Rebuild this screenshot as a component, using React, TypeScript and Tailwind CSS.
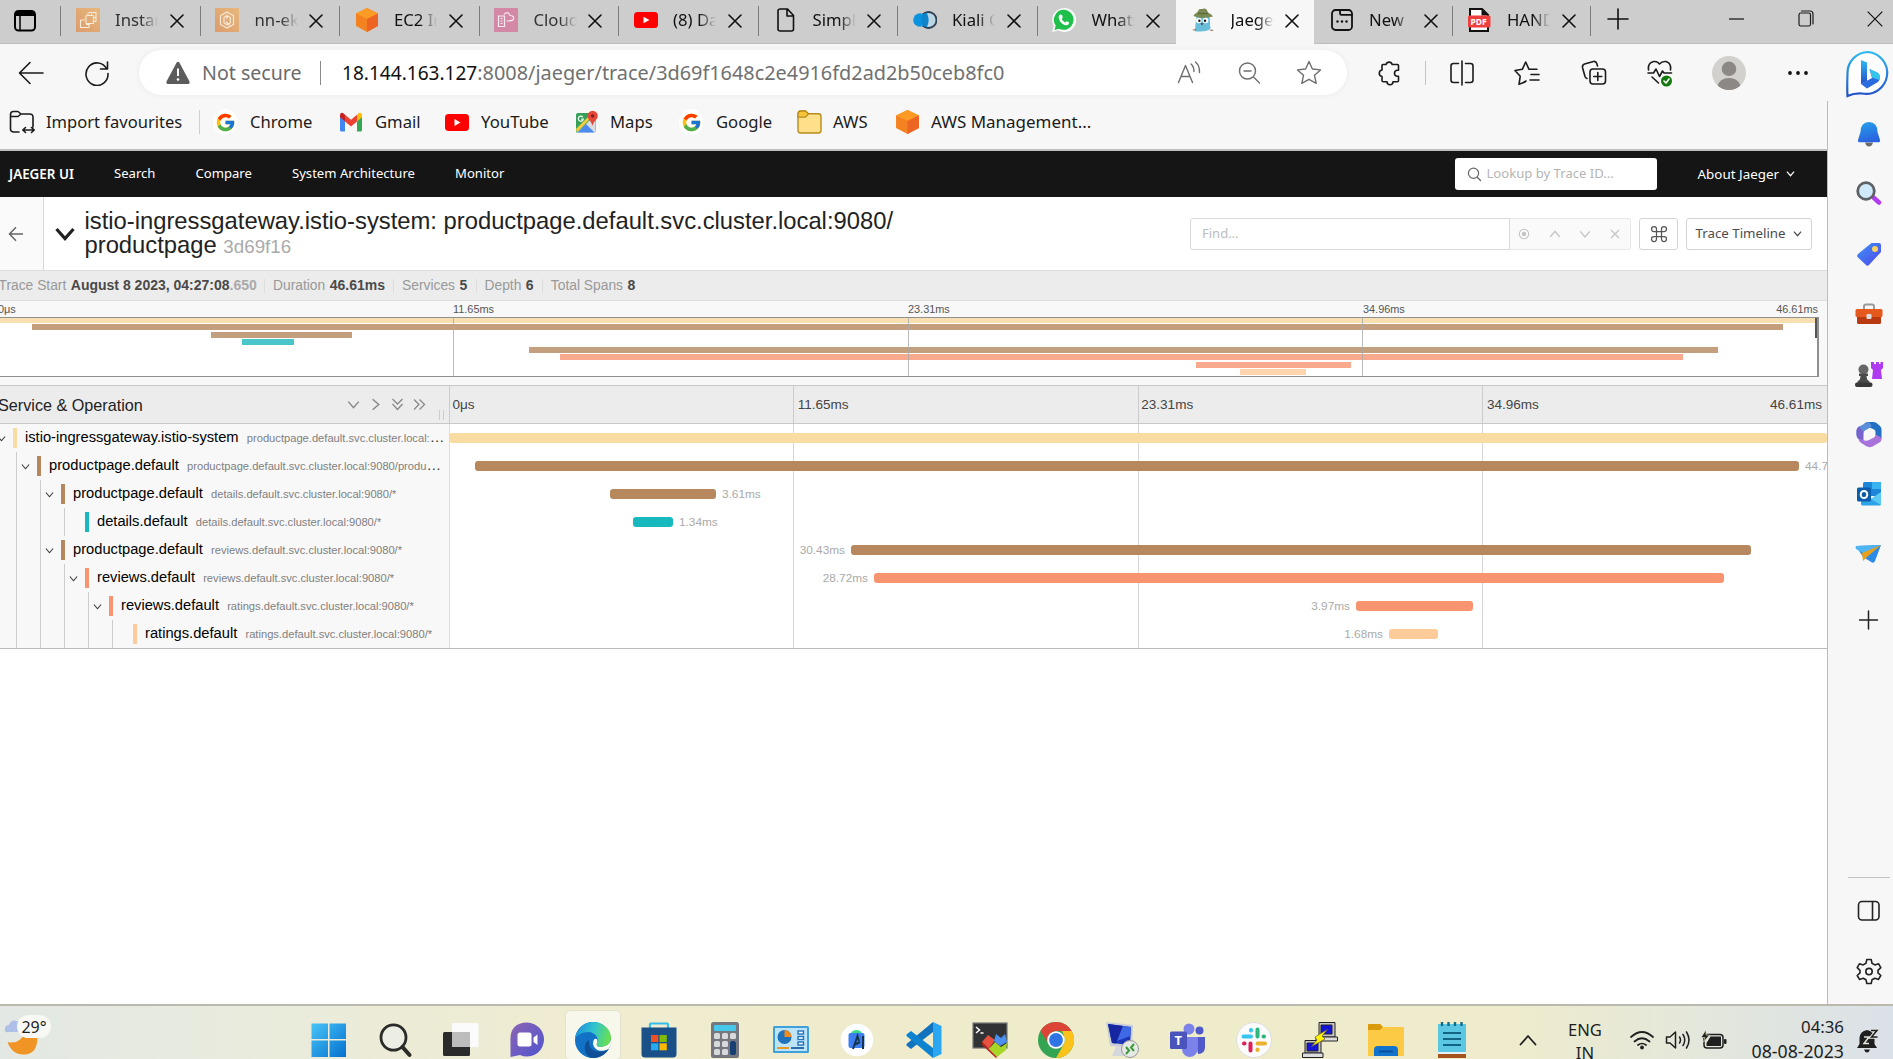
import React from "react";
import { FcGoogle } from "react-icons/fc";
import { Command } from "lucide-react";

const UI = "font-['Noto_Sans','Open_Sans',sans-serif]";
const ARIAL = "font-['Liberation_Sans',Arial,sans-serif]";

type P = React.SVGProps<SVGSVGElement>;

const line = {
  fill: "none",
  stroke: "currentColor",
  strokeWidth: 1.6,
  strokeLinecap: "round" as const,
  strokeLinejoin: "round" as const,
};

function Svg({ w = 24, h = 24, vb, children, ...rest }: P & { w?: number; h?: number; vb?: string }) {
  return (
    <svg width={w} height={h} viewBox={vb ?? `0 0 ${w} ${h}`} className="shrink-0" {...rest}>
      {children}
    </svg>
  );
}

/* ---------- favicons ---------- */

const Ec2Icon = () => (
  <Svg>
    <defs>
      <linearGradient id="ec2" x1="0" y1="1" x2="1" y2="0">
        <stop offset="0" stopColor="#dc9c6c" />
        <stop offset="1" stopColor="#e6b87c" />
      </linearGradient>
    </defs>
    <rect width="24" height="24" fill="url(#ec2)" />
    <g fill="none" stroke="#f6ead8" strokeWidth="1.1">
      <rect x="10" y="7.500" width="7.500" height="8" rx=".8" />
      <path d="M12.500 4.500H20V13.500H18M12 5V7M15.500 5.500V7M4.500 12H9M4.500 12V19.500H13V16.500M10 16.500H14M18 9.500H20" />
    </g>
  </Svg>
);

const EksIcon = () => (
  <Svg>
    <rect width="24" height="24" fill="url(#ec2)" />
    <g fill="none" stroke="#f6ead8" strokeWidth="1.200">
      <path d="M12 4L18.500 7.500V16.500L12 20L5.500 16.500V7.500Z" />
      <path d="M12 7.500L9 9.500V15L12 16.800L15.300 15V9.500L12 7.500V11M11 13.500L14.500 17.500" />
    </g>
  </Svg>
);

const AwsCube = ({ w = 24, h = 24 }: { w?: number; h?: number }) => (
  <Svg w={w} h={h} vb="0 0 24 24" preserveAspectRatio="none">
    <path d="M12 0L23 5.500V18L12 24L1 18V5.500Z" fill="#f58220" />
    <path d="M12 0L23 5.500L12 11L1 5.500Z" fill="#fb9a24" />
    <path d="M12 11L23 5.500V18L12 24Z" fill="#ec6523" />
  </Svg>
);

const CloudFormationIcon = () => (
  <Svg>
    <rect width="24" height="24" fill="#d389a5" />
    <g fill="none" stroke="#fbe9f1" strokeWidth="1.200">
      <path d="M4.500 8H10.500V18.500H4.500ZM6.500 10.500H8.500M6.500 13H8.500M6.500 15.500H8.500" />
      <path d="M10 6.500C12 3.500 16 5 16 7.500C19 7.500 20 9 19.500 11C19 12.800 17 13 12.500 13" />
    </g>
  </Svg>
);

const YouTubeIcon = ({ h = 16 }: { h?: number }) => (
  <Svg w={24} h={h} vb="0 0 24 16" preserveAspectRatio="none">
    <rect width="24" height="16" rx="3.500" fill="#f00" />
    <path d="M9.500 4.700L15.500 8L9.500 11.300Z" fill="#fff" />
  </Svg>
);

const FileIcon = () => (
  <Svg>
    <path d="M7.500 1H14.500L20.500 7.500V21Q20.500 23 18.500 23H7.500Q5 23 5 21V3Q5 1 7.500 1ZM14 1V8H20.500" {...line} stroke="#111" />
  </Svg>
);

const KialiIcon = () => (
  <Svg>
    <circle cx="15.500" cy="12" r="8" fill="#bcd6e4" stroke="#2d3f50" strokeWidth="1.800" />
    <circle cx="7" cy="12" r="6.800" fill="#0c93df" />
    <path d="M13.500 4.500A8 8 0 0 0 13.500 19.500A15 15 0 0 0 13.500 4.500" fill="#0e84cb" />
  </Svg>
);

const WhatsAppIcon = () => (
  <Svg>
    <path d="M12 0A12 12 0 1 1 6.500 22.500L0 24L1.800 18A12 12 0 0 1 12 0Z" fill="#f7faf7" />
    <path d="M12 1.800A10 10 0 1 1 7 20.700L2.500 22L3.700 17.500A10 10 0 0 1 12 1.800Z" fill="#1fbf4c" />
    <path d="M8.200 6.500L10 7L10.800 9.500L9.700 11C10.500 12.700 11.500 13.700 13.300 14.500L14.600 13.200L17 14.300C17.200 16.500 15.500 17.500 14 17.300C10 16.500 7 13 6.700 9.500C6.600 8 7.300 6.800 8.200 6.500Z" fill="#fff" />
  </Svg>
);

const JaegerIcon = () => (
  <Svg>
    <path d="M5.500 9H18.500C19.500 13 18.500 16 19.500 20C19 24 5 24 4 23C4.500 18 4.500 13 5.500 9Z" fill="#69bfdb" />
    <path d="M2.500 8C3 5.500 7 5 7.500 2C9 0 11 1.500 12 .8C14 0 16 1 16.500 3.500C17 5.500 21 6 22 8.500C15 10.500 8 10.500 2.500 8Z" fill="#7b8a52" />
    <path d="M7 5.500H17" stroke="#5d6a3a" strokeWidth="1.300" />
    <circle cx="7.800" cy="12.500" r="2.800" fill="#fff" />
    <circle cx="14.500" cy="12.500" r="2.800" fill="#fff" />
    <circle cx="8.400" cy="12.800" r="1.200" fill="#111" />
    <circle cx="14" cy="12.800" r="1.200" fill="#111" />
    <path d="M9.500 15.300H12.500L11 17.500Z" fill="#4d3525" />
    <path d="M1 22L5 20.500V23ZM20 21L23 23H19Z" fill="#a48763" />
  </Svg>
);

const NewTabIcon = () => (
  <Svg>
    <rect x="2" y="2" width="20" height="20" rx="3.500" {...line} stroke="#111" strokeWidth={1.8} />
    <path d="M10 2V5.500Q10 6.800 11.500 6.800H22" {...line} stroke="#111" strokeWidth={1.8} />
    <g fill="#111"><circle cx="7.500" cy="13.500" r="1.200" /><circle cx="12" cy="13.500" r="1.200" /><circle cx="16.500" cy="13.500" r="1.200" /></g>
  </Svg>
);

const PdfIcon = () => (
  <span className="relative -ml-px block h-6 w-6 shrink-0">
    <Svg>
      <path d="M3 1H15L21 7V23H3Z" fill="#fff" stroke="#111" strokeWidth="2" />
      <path d="M14.500 1V7.500H21Z" fill="#111" />
      <rect x="1" y="7.500" width="22.500" height="12" rx="1.500" fill="#ee3e3e" />
    </Svg>
    <span className={`absolute inset-x-0 top-[8px] text-center text-[8.500px] leading-[12px] font-bold text-white ${UI}`}>PDF</span>
  </span>
);

/* ---------- tab strip ---------- */

const tabs: { title: string; icon: React.ReactNode; w: string; dim?: boolean; active?: boolean }[] = [
  { title: "Instances", icon: <Ec2Icon />, dim: true, w: "w-[139.500px]" },
  { title: "nn-eks", icon: <EksIcon />, dim: true, w: "w-[139.500px]" },
  { title: "EC2 Instance", icon: <AwsCube />, w: "w-[139.500px]" },
  { title: "CloudFormation", icon: <CloudFormationIcon />, dim: true, w: "w-[139.500px]" },
  { title: "(8) Day", icon: <YouTubeIcon />, w: "w-[139.500px]" },
  { title: "Simple", icon: <FileIcon />, w: "w-[139.500px]" },
  { title: "Kiali Console", icon: <KialiIcon />, w: "w-[139.500px]" },
  { title: "WhatsApp", icon: <WhatsAppIcon />, w: "w-[139px]" },
  { title: "Jaeger UI", icon: <JaegerIcon />, active: true, w: "w-[138.500px]" },
  { title: "New", icon: <NewTabIcon />, w: "w-[138px]" },
  { title: "HANDS", icon: <PdfIcon />, w: "w-[137.500px]" },
];

function TabStrip() {
  return (
    <div className="flex h-[44px] shrink-0 items-start border-b border-[#bdbdbd] bg-[#cdcdcd] text-[#1b1b1b]">
      <div className="flex h-[42px] w-[60px] items-center pl-[13px]">
        <Svg>
          <rect x="2" y="2" width="20" height="19.500" rx="3.500" {...line} stroke="#000" strokeWidth={2} />
          <path d="M2 6V5Q2 2 5 2H19Q22 2 22 5V7H2Z" fill="#000" />
          <path d="M7 7V21" stroke="#000" strokeWidth="1.500" />
        </Svg>
      </div>
      {tabs.map((t, i) => (
        <div
          key={t.title}
          className={`relative flex h-[44px] shrink-0 items-start ${t.w} ${t.active ? "-mb-px bg-[#f7f7f7]" : ""}`}
        >
          {!t.active && i !== 9 && <span className="mt-[6px] h-[30px] w-px bg-[#7c7c7c]" />}
          {(t.active || i === 9) && <span className="w-px" />}
          <span className="ml-[14.500px] flex h-[40px] w-[25px] items-center">{t.icon}</span>
          <span
            className={`ml-[14.500px] h-[40px] w-[43px] overflow-hidden text-[16.700px] leading-[39px] whitespace-nowrap [mask-image:linear-gradient(to_right,black_60%,transparent)] ${t.dim ? "text-[#333]" : "text-[#111]"}`}
          >
            {t.title}
          </span>
          <span className="ml-[11.500px] flex h-[42px] items-center">
            <Svg w={14} h={14}>
              <path d="M1 1L13 13M13 1L1 13" {...line} stroke="#111" />
            </Svg>
          </span>
        </div>
      ))}
      <span className="mt-[6px] h-[30px] w-px bg-[#7c7c7c]" />
      <span className="ml-[16px] flex h-[38px] items-center">
        <Svg w={22} h={22}><path d="M11 1V21M1 11H21" {...line} stroke="#111" /></Svg>
      </span>
      <div className="ml-auto flex h-[38px] items-center pr-[10px]">
        <Svg w={16} h={16} className="mr-[53px]"><path d="M0 8H15" stroke="#111" strokeWidth="1.200" /></Svg>
        <Svg w={16} h={18} className="mr-[53px]">
          <path d="M3.500 1H12Q15 1 15 4V14" {...line} strokeWidth={1.2} />
          <rect x="1" y="3" width="11.500" height="13" rx="1.800" {...line} strokeWidth={1.2} />
        </Svg>
        <Svg w={16} h={16}><path d="M.7 .7L15.300 15.300M15.300 .7L.7 15.300" stroke="#111" strokeWidth="1.200" /></Svg>
      </div>
    </div>
  );
}

/* ---------- address bar ---------- */

function ToolCell({ children }: { children: React.ReactNode }) {
  return <span className="flex w-[66.300px] shrink-0 justify-center">{children}</span>;
}

function AddressBar() {
  return (
    <div className="flex h-[57px] shrink-0 items-center text-[#1b1b1b]">
      <div className="flex w-[139px] shrink-0 items-center pl-[18px]">
        <Svg w={26} h={24}><path d="M25 12H1.500M12 1.500L1.500 12L12 22.500" {...line} /></Svg>
        <Svg w={26} h={26} className="ml-[40px]">
          <path d="M22.800 9A11 11.300 0 1 0 24 13.500M23.500 2V9H16.500" {...line} />
        </Svg>
      </div>
      <div className="flex h-[45px] w-[1208px] shrink-0 items-center rounded-full bg-white pl-[27px] shadow-[0_0_6px_rgba(0,0,0,0.06)]">
        <Svg w={24} h={24}>
          <path d="M10.500 1.800Q12 -.2 13.500 1.800L23.500 20.500Q24 23 22 23H2Q0 23 .5 20.500Z" fill="#5c5c5c" />
          <path d="M12 7.500V15" stroke="#fff" strokeWidth="2" />
          <circle cx="12" cy="18.500" r="1.300" fill="#fff" />
        </Svg>
        <span className="ml-[12px] w-[118px] text-[19.600px] leading-[28px] whitespace-nowrap text-[#6b6b6b]">Not secure</span>
        <span className="h-[24px] w-px bg-[#8a8a8a]" />
        <span className="ml-[21px] text-[19.070px] leading-[28px] whitespace-nowrap text-[#111]">18.144.163.127</span>
        <span className="text-[19.880px] leading-[28px] whitespace-nowrap text-[#707070]">
          :8008/jaeger/trace/3d69f1648c2e4916fd2ad2b50ceb8fc0
        </span>
        <span className="mr-[25px] ml-auto flex items-center text-[#6e6e6e]">
          <Svg w={24} h={24} className="mr-[36px]">
            <path d="M1.500 21.500L8.500 4.500L15.500 21.500M4 15.500H13M14 3Q17 5.500 17 10.500M18.500 1Q23 5 22.500 11.500" {...line} strokeWidth={1.4} />
          </Svg>
          <Svg w={24} h={24} className="mr-[35px]">
            <circle cx="10.500" cy="10" r="8" {...line} strokeWidth={1.4} />
            <path d="M7 10H14M16.500 16L22.500 22" {...line} strokeWidth={1.4} />
          </Svg>
          <Svg w={26} h={25}>
            <path d="M13 1.500L16.400 9L24.500 9.900L18.500 15.300L20.200 23.300L13 19.300L5.800 23.300L7.500 15.300L1.500 9.900L9.600 9Z" {...line} strokeWidth={1.4} />
          </Svg>
        </span>
      </div>
      <span className="w-[9px]" />
      <ToolCell>
        <Svg w={24} h={26}>
          <path d="M8.500 4.500H9A3.200 3.200 0 0 1 15.200 4.500H20.500Q21.500 4.500 21.500 5.500V10.300H20.500A3 3 0 0 0 20.500 16.300H21.500V20.500Q21.500 21.800 20.500 21.800H16A3 3 0 0 1 10 21.800H6.500Q5 21.800 5 20.500V16.500A3.300 3.300 0 0 1 5 10V5.500Q5 4.500 6 4.500Z" {...line} />
        </Svg>
      </ToolCell>
      <span className="ml-[3px] h-[24px] w-px bg-[#c4c4c4]" />
      <span className="w-[3px]" />
      <ToolCell>
        <Svg w={26} h={26}>
          <path d="M9.500 3.500H4.500Q2 3.500 2 6V20Q2 22.500 4.500 22.500H9.500M13 1V25M16.500 3.500H21.500Q24 3.500 24 6V20Q24 22.500 21.500 22.500H16.500" {...line} />
        </Svg>
      </ToolCell>
      <ToolCell>
        <Svg w={28} h={26} className="-ml-[3px]">
          <path d="M12 22L6 24.300L7.200 16.300L2 10.500L9.300 9.300L12.700 2L16 9.300H24M18 14.500H26M17 20H26M10.500 22.500L13 21" {...line} />
        </Svg>
      </ToolCell>
      <ToolCell>
        <Svg w={26} h={26} className="-ml-[3px]">
          <rect x="9" y="9" width="15.500" height="15" rx="3" {...line} />
          <path d="M16.800 12.500V20.500M12.800 16.500H20.800M6 18.500Q4.500 18 4 16.500L1.500 7.500Q1 5 3.500 4L12.500 1.500Q15 1 15.800 3.500L16.500 6" {...line} />
        </Svg>
      </ToolCell>
      <ToolCell>
        <Svg w={28} h={28} className="-ml-[2px]">
          <path d="M2.500 11Q1.500 4 7.500 2.500Q11.500 2 13.500 5Q16 2 20 2.500Q25.500 4 24.500 11M2 14H7.500L10 10L13.500 17.500L16.500 12L18 14H25.500M6 18L12.500 24" {...line} />
          <circle cx="20.500" cy="22" r="5.500" fill="#13790f" />
          <path d="M18 22L20 24L23 20" {...line} stroke="#fff" />
        </Svg>
      </ToolCell>
      <ToolCell>
        <span className="ml-[2px] block h-[34px] w-[34px] overflow-hidden rounded-full">
          <Svg w={34} h={34}>
            <rect width="34" height="34" fill="#d3d1ce" />
            <circle cx="17" cy="12.800" r="7.300" fill="#8c8885" />
            <path d="M5 34C5 26 10 22 17 22C24 22 29 26 29 34Z" fill="#8c8885" />
          </Svg>
        </span>
      </ToolCell>
      <ToolCell>
        <Svg w={22} h={8} className="ml-[8px]"><g fill="#111"><circle cx="3" cy="4" r="1.900" /><circle cx="11" cy="4" r="1.900" /><circle cx="19" cy="4" r="1.900" /></g></Svg>
      </ToolCell>
    </div>
  );
}

/* ---------- bookmarks ---------- */

const GmailIcon = () => (
  <Svg w={24} h={20} vb="0 0 24 18" preserveAspectRatio="none">
    <path d="M1 3V16.500Q1 17.500 2 17.500H6V8L1 4Z" fill="#4285f4" />
    <path d="M18 8V17.500H22Q23 17.500 23 16.500V3L18 8Z" fill="#34a853" />
    <path d="M6 2.500L12 7L18 2.500V8.500L12 13L6 8.500Z" fill="#ea4335" />
    <path d="M18 2.500L20 1Q23 0 23 3V4.800L18 8.500Z" fill="#fbbc04" />
    <path d="M6 2.500L4 1Q1 0 1 3V4.800L6 8.500Z" fill="#c5221f" />
  </Svg>
);

const MapsIcon = () => (
  <Svg w={24} h={24}>
    <rect x="1" y="3" width="19.500" height="20" rx="2" fill="#34a058" />
    <path d="M2 23L20 5V23Z" fill="#d9dde2" />
    <path d="M2.500 22.500L11 14L19.500 22.500Z" fill="#4d8af0" />
    <path d="M1 19L17 3H20.500L2 22.500Z" fill="#f5cb3c" />
    <path d="M17.500 16C16.500 11 12.500 9.500 12.500 6A5 5 0 0 1 22.800 6C22.800 9.500 18.500 11 17.500 16Z" fill="#e2493b" />
    <circle cx="17.600" cy="6" r="1.800" fill="#8c1e17" />
    <path d="M7.800 7.200A2.500 2.500 0 1 0 8.300 9H6" fill="none" stroke="#fff" strokeWidth="1.200" />
  </Svg>
);

const FolderIcon = () => (
  <Svg w={25} h={24} vb="0 0 25 22" preserveAspectRatio="none">
    <path d="M1 4Q1 1 3.500 1H8.500L11.500 3.500H21.500Q24 3.500 24 6V18.500Q24 21 21.500 21H3.500Q1 21 1 18.500Z" fill="#ffe08a" stroke="#b88a1d" strokeWidth="1.400" />
    <path d="M1 6.500H8.500L11.500 3.500L8.500 1H3.500Q1 1 1 4Z" fill="#f5c63c" stroke="#b88a1d" strokeWidth="1.200" />
  </Svg>
);

function Bookmark({ icon, label, cls }: { icon: React.ReactNode; label: string; cls: string }) {
  return (
    <span className={`flex shrink-0 items-center whitespace-nowrap ${cls}`}>
      {icon}
      <span className="leading-[26px]">{label}</span>
    </span>
  );
}

const GoogleG = () => (
  <span className="flex h-[26px] w-[24px] items-center justify-center rounded-full bg-white">
    <FcGoogle size={21} />
  </span>
);

function BookmarksBar() {
  return (
    <div className="flex h-[48px] shrink-0 items-start pt-[8px] text-[#1b1b1b]">
      <span className="flex h-[26px] w-[199px] items-center pl-[9px] text-[16.550px] whitespace-nowrap">
        <Svg w={26} h={24}>
          <path d="M10 22H5Q1.500 22 1.500 19V4.500Q1.500 1.500 4.500 1.500H9L12 4H20.500Q24 4 24 7V17M1.500 6.500H9L12 4M14 20H25M16.500 17.500L13.800 20L16.500 22.500M22.500 17.500L25.200 20L22.500 22.500" {...line} />
        </Svg>
        <span className="ml-[11px]">Import favourites</span>
      </span>
      <span className="mt-px h-[24px] w-px bg-[#cfcfcf]" />
      <span className="w-[13px]" />
      <Bookmark cls="w-[126px] text-[16.650px] gap-[13px]" icon={<GoogleG />} label="Chrome" />
      <Bookmark cls="w-[106px] text-[16.650px] gap-[12px]" icon={<GmailIcon />} label="Gmail" />
      <Bookmark cls="w-[130px] text-[16.770px] gap-[12px]" icon={<YouTubeIcon h={17} />} label="YouTube" />
      <Bookmark cls="w-[104px] text-[16.650px] gap-[11px]" icon={<MapsIcon />} label="Maps" />
      <Bookmark cls="w-[118px] text-[16.650px] gap-[13px]" icon={<GoogleG />} label="Google" />
      <Bookmark cls="w-[98px] text-[16.650px] gap-[11px]" icon={<FolderIcon />} label="AWS" />
      <Bookmark cls="text-[16.980px] gap-[11px]" icon={<AwsCube w={25} h={24} />} label="AWS Management..." />
    </div>
  );
}

/* ---------- Jaeger ---------- */

const Chevron = ({ d = "down", s = 10, w = 1.3 }: { d?: "down" | "up" | "right"; s?: number; w?: number }) => (
  <Svg w={s} h={s} vb="0 0 10 10">
    <path
      d={d === "down" ? "M1 2.800L5 7.500L9 2.800" : d === "up" ? "M1 7.500L5 2.800L9 7.500" : "M2.800 1L7.500 5L2.800 9"}
      fill="none"
      stroke="currentColor"
      strokeWidth={w}
    />
  </Svg>
);

function NavBar() {
  return (
    <div className="flex h-[46px] shrink-0 items-center bg-[#151515] text-[13.100px] whitespace-nowrap text-white">
      <span className="w-[105px] pl-[9px] text-[13.400px] font-semibold">JAEGER UI</span>
      <span className="w-[90.500px] pl-[9px]">Search</span>
      <span className="w-[96.500px]">Compare</span>
      <span className="w-[163px]">System Architecture</span>
      <span>Monitor</span>
      <span className="ml-auto flex h-[32px] w-[202px] items-center rounded-[3px] bg-white pl-[12px] text-[#b5b5b5]">
        <Svg w={15} h={15}>
          <circle cx="6.500" cy="6.300" r="5.100" {...line} stroke="#666" strokeWidth={1.2} />
          <path d="M10.300 10.200L13.500 13.500" {...line} stroke="#666" strokeWidth={1.3} />
        </Svg>
        <span className="ml-[4.500px]">Lookup by Trace ID...</span>
      </span>
      <span className="ml-[40.500px] flex w-[129.500px] items-center gap-[7px] text-[13.400px]">
        About Jaeger <Chevron s={9} />
      </span>
    </div>
  );
}

function TraceHeader() {
  return (
    <div className="flex h-[74px] shrink-0 items-center border-b border-[#ddd] bg-white">
      <span className="flex h-full w-[44px] shrink-0 items-center border-r border-[#d8d8d8] bg-[#fafafa] pl-[8px] text-[#666]">
        <Svg w={16} h={16}><path d="M15 8H1.500M8 1.300L1.500 8L8 14.700" {...line} strokeWidth={1.5} strokeLinecap="butt" strokeLinejoin="miter" /></Svg>
      </span>
      <Svg w={20} h={14} className="ml-[10.500px]">
        <path d="M1.500 2L10 11.500L18.500 2" fill="none" stroke="#222" strokeWidth="3.200" />
      </Svg>
      <h1 className="mt-px ml-[10px] w-[830px] text-[23.790px] leading-[24.500px] text-[#222]">
        istio-ingressgateway.istio-system: productpage.default.svc.cluster.local:9080/
        <br />
        productpage <span className="text-[18.760px] text-[#aaa]">3d69f16</span>
      </h1>
      <div className="ml-auto flex h-[32px] items-stretch pr-[15px]">
        <span className="flex w-[320px] items-center rounded-l-[3px] border border-[#d9d9d9] pl-[11px] text-[#bdbdbd]">
          <span className={`text-[13px] ${UI}`}>Find...</span>
        </span>
        <span className="flex w-[121px] items-center justify-between rounded-r-[3px] border border-l-0 border-[#e8e8e8] bg-[#fafafa] pr-[10px] pl-[8px] text-[#c4c4c4]">
          <Svg w={12} h={12}><circle cx="6" cy="6" r="4.700" fill="none" stroke="currentColor" strokeWidth="1.100" /><circle cx="6" cy="6" r="2.200" fill="currentColor" /></Svg>
          <Chevron d="up" s={12} w={1.100} />
          <Chevron s={12} w={1.100} />
          <Svg w={10} h={10}><path d="M1 1L9 9M9 1L1 9" stroke="currentColor" strokeWidth="1.300" /></Svg>
        </span>
        <span className="ml-[8px] flex w-[39px] items-center justify-center rounded-[3px] border border-[#d4d4d4] text-[#555]">
          <Command size={20} strokeWidth={1.500} />
        </span>
        <span className="ml-[8px] flex w-[126px] items-center gap-[7px] rounded-[3px] border border-[#d4d4d4] pl-[8.500px] text-[13.300px] whitespace-nowrap text-[#4c4c4c]">
          <span className={UI}>Trace Timeline</span>
          <Chevron s={9} />
        </span>
      </div>
    </div>
  );
}

const facts = [
  { label: "Trace Start", value: "August 8 2023, 04:27:08", tail: ".650", cls: "w-[274.500px]" },
  { label: "Duration", value: "46.61ms", cls: "w-[129px]" },
  { label: "Services", value: "5", cls: "w-[82.500px]" },
  { label: "Depth", value: "6", cls: "w-[66.300px]" },
  { label: "Total Spans", value: "8", cls: "" },
];

function Facts() {
  return (
    <div className="flex h-[30px] shrink-0 items-center border-b border-[#dedede] bg-[#ececec] text-[13.820px] whitespace-nowrap">
      {facts.map((f, i) => (
        <span key={f.label} className={`flex items-center ${f.cls} ${i === 0 ? "-ml-[1.500px]" : ""}`}>
          <span className="text-[#999]">{f.label}</span>
          <span className="ml-[4.500px] text-[14px] font-bold text-[#4a4a4a]">
            {f.value}
            {f.tail && <span className="text-[#aaa]">{f.tail}</span>}
          </span>
          {i < 4 && <span className="mr-[8px] ml-auto h-[14px] w-px bg-[#ddd]" />}
        </span>
      ))}
    </div>
  );
}

const miniBars = [
  { x: 0, w: 1818, c: "bg-[#f8dfb2]" },
  { x: 34, w: 1751, c: "bg-[#c39f7d]" },
  { x: 213, w: 141, c: "bg-[#c39f7d]" },
  { x: 243.5, w: 52.5, c: "bg-[#48c6ca]" },
  { x: 531, w: 1189, c: "bg-[#c39f7d]" },
  { x: 562, w: 1123, c: "bg-[#f8a98e]" },
  { x: 1198, w: 155, c: "bg-[#f8a98e]" },
  { x: 1242, w: 66, c: "bg-[#fdd4ab]" },
];

function MiniMap() {
  return (
    <div className="h-[84px] shrink-0 overflow-hidden bg-[#f8f8f8]">
      <div className="-ml-[2px] w-[1822px]">
        <div className="grid h-[16px] w-[1820px] grid-cols-4 text-[10.900px] leading-[16px] text-[#555]">
          <span>0μs</span>
          <span>11.65ms</span>
          <span>23.31ms</span>
          <span className="flex justify-between"><span>34.96ms</span><span>46.61ms</span></span>
        </div>
        <div className="relative h-[60px] w-[1821px] overflow-hidden border-y border-r-2 border-[#909090] bg-white">
          <div className="-mt-px flex flex-col gap-[1.450px]">
            {miniBars.map((b, i) => (
              <span key={i} className={`block h-[6px] shrink-0 ${b.c}`} style={{ marginLeft: b.x, width: b.w }} />
            ))}
          </div>
          <div className="absolute inset-y-0 left-0 grid w-[1819px] grid-cols-4">
            <span />
            <span className="border-l border-[#aaa]/80" />
            <span className="border-l border-[#aaa]/80" />
            <span className="border-l border-[#aaa]/80" />
          </div>
          <span className="absolute top-0 right-0 h-[20px] w-[2px] bg-[#555]" />
        </div>
      </div>
    </div>
  );
}

type Span = {
  depth: number;
  name: string;
  op: string;
  bar: string;
  x: number;
  w: number;
  label?: string;
  left?: boolean;
  leaf?: boolean;
};

const BROWN = "bg-[#b7885e]";
const spans: Span[] = [
  { depth: 0, name: "istio-ingressgateway.istio-system", op: "productpage.default.svc.cluster.local:9080/productpage", bar: "bg-[#f8dca1]", x: 0, w: 1378 },
  { depth: 1, name: "productpage.default", op: "productpage.default.svc.cluster.local:9080/productpage", bar: BROWN, x: 26, w: 1324, label: "44.7ms" },
  { depth: 2, name: "productpage.default", op: "details.default.svc.cluster.local:9080/*", bar: BROWN, x: 161, w: 106, label: "3.61ms" },
  { depth: 3, name: "details.default", op: "details.default.svc.cluster.local:9080/*", bar: "bg-[#17b8be]", x: 184, w: 40, label: "1.34ms", leaf: true },
  { depth: 2, name: "productpage.default", op: "reviews.default.svc.cluster.local:9080/*", bar: BROWN, x: 402, w: 900, label: "30.43ms", left: true },
  { depth: 3, name: "reviews.default", op: "reviews.default.svc.cluster.local:9080/*", bar: "bg-[#f89570]", x: 425, w: 850, label: "28.72ms", left: true },
  { depth: 4, name: "reviews.default", op: "ratings.default.svc.cluster.local:9080/*", bar: "bg-[#f89570]", x: 907, w: 117, label: "3.97ms", left: true },
  { depth: 5, name: "ratings.default", op: "ratings.default.svc.cluster.local:9080/*", bar: "bg-[#ffcb99]", x: 940, w: 49, label: "1.68ms", left: true, leaf: true },
];

function TimelineHeader() {
  return (
    <div className="flex h-[39px] shrink-0 border-y border-[#c8c8c8] bg-[#ececec]">
      <div className="flex w-[450px] shrink-0 items-center border-r border-[#ccc] text-[#888]">
        <span className="mt-[2px] -ml-[2px] text-[16.200px] whitespace-nowrap text-[#222]">Service &amp; Operation</span>
        <span className="ml-auto flex items-center gap-[9px] pr-[13px]">
          <Chevron s={13} w={1.1} />
          <Chevron s={13} w={1.1} d="right" />
          <Svg w={13} h={13}><path d="M1.500 1L6.500 6L11.500 1M1.500 6L6.500 11.500L11.500 6" fill="none" stroke="currentColor" strokeWidth="1.300" /></Svg>
          <Svg w={13} h={13}><path d="M1 1.500L6 6.500L1 11.500M6.500 1.500L11.500 6.500L6.500 11.500" fill="none" stroke="currentColor" strokeWidth="1.300" /></Svg>
        </span>
        <span className="mr-[5.500px] mb-[3px] h-[10px] w-[5px] self-end border-x border-[#ccc]" />
      </div>
      <div className="-ml-[1.500px] grid flex-1 grid-cols-4 pt-[2px] text-[13.560px] text-[#444]">
        <span className="flex items-center pl-[4px]">0μs</span>
        <span className="-mt-[2px] flex items-center border-l border-[#ccc] pt-[2px] pl-[3.500px]">11.65ms</span>
        <span className="-mt-[2px] flex items-center border-l border-[#ccc] pt-[2px] pl-[2.500px]">23.31ms</span>
        <span className="-mt-[2px] flex items-center justify-between border-l border-[#ccc] pt-[2px] pr-[5px] pl-[3.500px]">
          <span>34.96ms</span>
          <span>46.61ms</span>
        </span>
      </div>
    </div>
  );
}

function SpanRow({ s }: { s: Span }) {
  return (
    <div className="flex h-[28px]">
      <div className="flex w-[450px] shrink-0 items-stretch overflow-hidden border-r border-[#ddd] bg-[#f8f8f8] pr-[3.800px]">
        <span className="-ml-[7px]" />
        {Array.from({ length: s.depth }, (_, i) => (
          <span key={i} className="w-[24px] shrink-0 border-r border-[#cdcdcd]" />
        ))}
        <span className="flex w-[20px] shrink-0 items-center pl-[4px] text-[#333]">{!s.leaf && <Chevron s={9} w={1.2} />}</span>
        <span className={`my-[4px] w-[4px] shrink-0 ${s.bar}`} />
        <span className="ml-[8px] shrink-0 text-[14.700px] leading-[27px] whitespace-nowrap text-black">{s.name}</span>
        <span className="ml-[8.200px] min-w-0 overflow-hidden text-[14.670px] leading-[27px] text-ellipsis whitespace-nowrap text-[#333]">
          <span className="text-[11.170px] text-[#808080]">{s.op}</span>
        </span>
      </div>
      <div className="relative -ml-px flex min-w-0 flex-1 items-center overflow-hidden">
        <div className="absolute inset-y-0 right-0 -left-[0.500px] grid grid-cols-4">
          <span />
          <span className="border-l border-[#d6d6d6]" />
          <span className="border-l border-[#d6d6d6]" />
          <span className="border-l border-[#d6d6d6]" />
        </div>
        <div className={`relative h-[10px] shrink-0 rounded-[3px] ${s.bar}`} style={{ marginLeft: s.x, width: s.w }}>
          {s.label && (
            <span
              className={`absolute top-1/2 -translate-y-1/2 text-[11.830px] leading-[16px] text-[#aaa] ${s.left ? "right-full mr-[6px]" : "left-full ml-[6px]"}`}
            >
              {s.label}
            </span>
          )}
        </div>
      </div>
    </div>
  );
}

function JaegerPage() {
  return (
    <main className="flex min-h-0 flex-1 flex-col overflow-hidden bg-white">
      <NavBar />
      <div className={`flex min-h-0 flex-1 flex-col ${ARIAL}`}>
        <TraceHeader />
        <Facts />
        <MiniMap />
        <TimelineHeader />
        <div className="border-b border-[#bbb]">
          {spans.map((s, i) => (
            <SpanRow key={i} s={s} />
          ))}
        </div>
      </div>
    </main>
  );
}

/* ---------- Edge sidebar ---------- */

const BingIcon = () => (
  <Svg w={46} h={48}>
    <defs>
      <linearGradient id="bg1" x1="0" y1="0" x2="0" y2="1">
        <stop offset="0" stopColor="#2db9f0" />
        <stop offset="1" stopColor="#2450c8" />
      </linearGradient>
    </defs>
    <path d="M23 2A21 21 0 1 1 17 43.500Q9 43 2.500 46Q2 40 2.500 23A21 21 0 0 1 23 2Z" fill="#fff" stroke="url(#bg1)" strokeWidth="2.200" />
    <path d="M16 10L22 12.500V31L16 34Z" fill="url(#bg1)" />
    <path d="M24.500 19L33 23Q37 27 33 32L22 38.500L16 34L27 28Z" fill="#2a6be0" />
    <path d="M24.500 19L33 23Q36 26 34.500 30L27 27.500Z" fill="#35c5ea" />
  </Svg>
);

const sideIcons: { h: string; icon: React.ReactNode }[] = [
  { h: "h-[60px]", icon: (
    <Svg w={24} h={26}><defs><linearGradient id="bell" x1="0" y1="0" x2="0.300" y2="1"><stop offset="0" stopColor="#25a3ea" /><stop offset="1" stopColor="#2a63e0" /></linearGradient></defs>
      <path d="M8 21.500H16Q15 25.500 12 25.500Q9 25.500 8 21.500Z" fill="#6b6b6b" /><path d="M12 1Q20.500 1.500 20.500 11L23 19Q23.500 21.300 21 21.300H3Q.5 21.300 1 19L3.500 11Q3.500 1.500 12 1Z" fill="url(#bell)" /></Svg>) },
  { h: "h-[59px]", icon: (
    <Svg w={26} h={26}><path d="M18 17L23 21.500" stroke="#b43cf0" strokeWidth="4.500" strokeLinecap="round" /><circle cx="10" cy="10" r="8.300" fill="#cfe9fa" stroke="#5e6165" strokeWidth="2.800" /></Svg>) },
  { h: "h-[61px]", icon: (
    <Svg w={26} h={26}><defs><linearGradient id="tag" x1="0" y1="0" x2="1" y2="1"><stop offset="0" stopColor="#3b93f5" /><stop offset="1" stopColor="#5148e8" /></linearGradient></defs>
      <path d="M15.500 2H23Q25 2 25 4V11L13 24Q11.500 25.500 10 24L1.500 16Q.5 14.500 2 13Z" fill="url(#tag)" /><circle cx="19" cy="8" r="3" fill="#f8d25c" /></Svg>) },
  { h: "h-[60px]", icon: (
    <Svg w={28} h={24}><path d="M9 8V4.500Q9 2.500 11 2.500H17Q19 2.500 19 4.500V8" fill="none" stroke="#9a9a9a" strokeWidth="2" /><rect x="2" y="12" width="24" height="10" rx="1.500" fill="#b93a11" /><rect x=".5" y="7" width="27" height="8" rx="1.500" fill="#e5591f" /><rect x="11.500" y="12" width="5" height="5" rx="1" fill="#ddd" /></Svg>) },
  { h: "h-[60px]", icon: (
    <Svg w={28} h={27}><path d="M16 1H19V3H21V1H24V3H25.500V1H28V7L26 9L27 18H17L18 9L16 7Z" fill="#b03af2" /><circle cx="8.500" cy="8.500" r="5" fill="#666" /><path d="M4 12.500H13V15H11.500Q11.500 19 14.500 20.500V22H2.500V20.500Q5.500 19 5.500 15H4Z" fill="#4a4a4a" /><rect x="0" y="21.500" width="17.500" height="4.500" rx="2" fill="#383838" /></Svg>) },
  { h: "h-[60px]", icon: (
    <Svg w={26} h={27}>
      <path d="M8 3Q9.500 1 12 1H17Q19 1 20.500 2L23.500 4.500Q25.500 6 25.500 8.500V18L19.500 14V11Q19.500 9 18 8.500L13.500 6.500Z" fill="#2170c4" />
      <path d="M8 3L12.500 1Q18 5 13.500 7L9 9.500Q7 10.500 7 13V20L2.500 18Q.5 16.500 .5 14V9.500Q.5 7 3 5.500Z" fill="#5b8fdc" />
      <path d="M.5 13.500V9.500Q.5 7 3 5.500L7.500 11V20L2.500 18Q.5 16.500 .5 13.500Z" fill="#7a62cc" />
      <path d="M2.500 18L7 19Q10 20.500 13 19L18 16.500Q19.500 15.500 19.500 13.500L25.500 16.500V18Q25.500 20.500 23.500 21.500L16.500 25.500Q13 27 10 25L4.500 21.500Q3 20.500 2.500 18Z" fill="#a873da" />
      <path d="M9 10.500L14 8L18.500 10.500V15L13 18L9 15.500Z" fill="#f7f7f7" />
    </Svg>) },
  { h: "h-[60px]", icon: (
    <Svg w={26} h={26}><rect x="7" y="1" width="18" height="14" rx="1.500" fill="#1c87d8" /><rect x="16" y="1" width="9" height="7" fill="#38b4ef" /><path d="M5 13L15 18L25 11V23Q25 24.500 23.500 24.500H6.500Q5 24.500 5 23Z" fill="#2ea3e6" /><path d="M15 18L25 11V24Z" fill="#5bcaf5" /><rect x="1" y="6.500" width="14" height="14" rx="1.500" fill="#0b5cab" /><ellipse cx="8" cy="13.500" rx="3.300" ry="3.600" fill="none" stroke="#fff" strokeWidth="2" /></Svg>) },
  { h: "h-[60px]", icon: (
    <Svg w={27} h={20}><path d="M1 2L26 1L20 17Q19 19.500 17 18.500L8 13Z" fill="#2d8be8" /><path d="M1 2Q0 3 1 5L8 9L26 1Z" fill="#4fb5f2" /><path d="M26 1L7 9L8 17L12.500 12.500Z" fill="#e9a01d" /></Svg>) },
  { h: "h-[71px]", icon: <Svg w={20} h={20}><path d="M9.500 1V19M.5 10H18.500" {...line} stroke="#222" strokeWidth={1.5} /></Svg> },
];

function Sidebar() {
  return (
    <aside className="-mt-[57px] flex w-[65px] shrink-0 flex-col items-center pl-[16px]">
      <div className="flex h-[60px] items-center pr-px"><BingIcon /></div>
      {sideIcons.map((s, i) => (
        <div key={i} className={`flex items-center justify-center ${s.h}`}>{s.icon}</div>
      ))}
      <div className="mt-auto h-[1.500px] w-[42px] bg-[#c4c4c4]" />
      <div className="flex h-[66px] items-center">
        <Svg w={24} h={22}><rect x="1.500" y="1.500" width="20.500" height="18.500" rx="3.500" {...line} stroke="#222" /><path d="M15.500 1.500V20" stroke="#222" strokeWidth="1.600" /></Svg>
      </div>
      <div className="mb-[5px] flex h-[55px] items-center">
        <Svg w={26} h={27} vb="0 0 26 27">
          <path d="M10.800 1.500H15.200L16 5.300L18.800 6.900L22.500 5.700L24.800 9.600L22 12.300V14.900L24.800 17.500L22.500 21.400L18.800 20.200L16 21.800L15.200 25.500H10.800L10 21.800L7.200 20.200L3.500 21.400L1.200 17.500L4 14.900V12.300L1.200 9.600L3.500 5.700L7.200 6.900L10 5.300Z" {...line} stroke="#222" />
          <circle cx="13" cy="13.600" r="3.200" {...line} stroke="#222" />
        </Svg>
      </div>
    </aside>
  );
}

/* ---------- Windows taskbar ---------- */

const pinned: React.ReactNode[] = [
  <Svg w={36} h={36}><defs><linearGradient id="win" x1="0" y1="0" x2="1" y2="1"><stop offset="0" stopColor="#46c4f7" /><stop offset="1" stopColor="#0670cf" /></linearGradient></defs><path d="M.5 1.500H17V17H.5ZM18.500 1.500H35V17H18.500ZM.5 18.500H17V35H.5ZM18.500 18.500H35V35H18.500Z" fill="url(#win)" /></Svg>,
  <Svg w={36} h={36}><ellipse cx="16.500" cy="15.500" rx="12.500" ry="12.700" fill="#eceee4" stroke="#2b2b28" strokeWidth="2.800" /><path d="M25.500 25L32.500 33" stroke="#2b2b28" strokeWidth="4" strokeLinecap="round" /></Svg>,
  <Svg w={36} h={36}><rect x="0" y="10" width="27" height="24" rx="1.500" fill="#2b2b2b" /><rect x="9" y="1" width="26.500" height="24" rx="1.500" fill="#fbfbfb" /><rect x="9" y="10" width="18" height="15" fill="#bdbdbd" /></Svg>,
  <Svg w={36} h={36}><defs><linearGradient id="chat" x1="0" y1="0" x2="1" y2="1"><stop offset="0" stopColor="#8d64b4" /><stop offset="1" stopColor="#4f55cf" /></linearGradient></defs><path d="M18 .5A17 17 0 1 1 11 33L1.500 35V20Q0 1 18 .5Z" fill="url(#chat)" /><rect x="8.500" y="10.500" width="14" height="14" rx="2.500" fill="#fff" /><path d="M24.500 15.500L28.500 12.500V23L24.500 20Z" fill="#fff" /></Svg>,
  <Svg w={36} h={36}><defs><linearGradient id="e1" x1="0" y1="0.300" x2="1" y2="0.500"><stop offset="0" stopColor="#1c8fd8" /><stop offset=".5" stopColor="#31c3d0" /><stop offset="1" stopColor="#6be04b" /></linearGradient></defs>
    <circle cx="18" cy="18" r="18" fill="#1272c6" /><path d="M0 17C1 7 9 0 18 0C28 0 36 7 36 16C36 22 31 25 25 25C22 25 21 23.500 22 21C24 16 21 11 14 10C7 10 2 13 0 17Z" fill="url(#e1)" /><path d="M14 18C13 26 19 31 27 29.500C30 29 32 28 34 26.500C30 34 22 37 15 35.500C8 31 8 21 14 18Z" fill="#0f4f95" /><path d="M22 21C21 23.500 22 25 25 25C30 25 34 23 36 18V22L33.500 27C28 30 20 30 18 22Q17.500 19 19.500 17Q23 16 22 21Z" fill="#fafaf0" /></Svg>,
  <Svg w={36} h={36}><path d="M9 8V2.500Q9 1.500 10 1.500H26Q27 1.500 27 2.500V8" fill="none" stroke="#35bde9" strokeWidth="2.200" /><path d="M.5 5.500H35.500V32Q35.500 35.500 32 35.500H4Q.5 35.500 .5 32Z" fill="#1a4f87" /><rect x="10" y="13" width="7.300" height="7" fill="#f25022" /><rect x="18.500" y="13" width="7.300" height="7" fill="#7fba00" /><rect x="10" y="21.300" width="7.300" height="7" fill="#27a9ee" /><rect x="18.500" y="21.300" width="7.300" height="7" fill="#ffb900" /></Svg>,
  <Svg w={36} h={36}><rect x="4" y="0" width="28" height="36" rx="2.500" fill="#74787e" /><rect x="7" y="3" width="22" height="6" rx="1" fill="#45c8ea" />{[11, 19, 27].map((y) => [7, 15, 23].map((x) => <rect key={`${x}-${y}`} x={x} y={y} width="6" height="6" rx="1.500" fill="#d9dade" />))}<rect x="23" y="19" width="6" height="14" rx="1.500" fill="#173f74" /></Svg>,
  <Svg w={36} h={36}><rect x="0" y="4" width="36" height="27" rx="1.500" fill="#3ea1dc" /><rect x="2" y="6" width="32" height="23" fill="#bde4f8" /><circle cx="11.500" cy="15" r="7" fill="#2073bb" /><path d="M11.500 15V8A7 7 0 0 1 18.500 15Z" fill="#f08b1c" /><g fill="#fff" stroke="#2073bb" strokeWidth="1.400"><rect x="25" y="9" width="5.500" height="3" /><rect x="25" y="14.500" width="5.500" height="3" /><rect x="25" y="20" width="5.500" height="3" /></g><path d="M4 26H16" stroke="#e39a2a" strokeWidth="2" /><path d="M18 26H31" stroke="#2b6ea8" strokeWidth="2" /></Svg>,
  <Svg w={36} h={36}><circle cx="18" cy="18" r="16.300" fill="#fff" /><rect x="9.500" y="11" width="16" height="15" rx="2" fill="#3d7ff0" /><path d="M12 11A6 5 0 0 1 23 11Z" fill="#3ddc84" /><path d="M14 27L18.500 14L20 19M24 14V27M16 22.500L21 20" stroke="#16334f" strokeWidth="2" fill="none" /></Svg>,
  <Svg w={36} h={36}><path d="M27 0V10L5 27L.5 23.500V22Z" fill="#1173bd" /><path d="M27 36V26L5 9L.5 12.500V14Z" fill="#0e83d0" /><path d="M27 0L35.500 4V32L27 36V10Z" fill="#2ba6f0" /></Svg>,
  <Svg w={36} h={36}><rect x="1" y="1" width="34" height="25" fill="#303234" stroke="#777" strokeWidth="1.200" /><path d="M4 5L7.500 8L4 11M8.500 11H11.500" fill="none" stroke="#fff" strokeWidth="1.500" /><path d="M16 13L23 18L17 27L10 20Z" fill="#e8503f" /><path d="M24 12L29 16L33 12L35 20L28 24L22 19Z" fill="#4b8ff0" /><path d="M23 20L29 25L35 21L34 28L25 35L17 27Z" fill="#a8d627" /><path d="M10 20L17 27L25 35L24 36L10 23Z" fill="#b3261c" /></Svg>,
  <Svg w={36} h={36}><circle cx="18" cy="18" r="18" fill="#33a552" /><path d="M2.400 9A18 18 0 0 1 33.600 9H18Q9 10 9.500 20Z" fill="#dc4437" /><path d="M33.600 9A18 18 0 0 1 18 36L26 22Q28 15 24 9Z" fill="#fbc319" /><circle cx="18" cy="18" r="8.800" fill="#fff" /><circle cx="18" cy="18" r="6.900" fill="#2f74e4" /></Svg>,
  <Svg w={36} h={36}><path d="M2 0L29 3L28 26L6 24Z" fill="#c9ced6" /><path d="M4 2L27 5L26 23L8 21Z" fill="#1a35b8" /><path d="M4 2L19 4L12 21.500L8 21Z" fill="#1526a0" /><path d="M19 4L27 5L26.500 14L13 19Z" fill="#3f68e6" /><path d="M12 25L22 26L24 34H8Z" fill="#d4d7dc" /><circle cx="26" cy="27" r="8.500" fill="#e7e9e6" stroke="#999" /><path d="M22 25L25 28.500L22 32M30 22L27 25.500L30 29" stroke="#3c9a39" strokeWidth="2" fill="none" /></Svg>,
  <span className="relative block h-[36px] w-[36px]"><Svg w={36} h={36}><circle cx="29.500" cy="8.500" r="4" fill="#5059c9" /><path d="M25 15H35V25Q35 32 28 32Z" fill="#5059c9" /><circle cx="19" cy="7" r="5.500" fill="#7b83eb" /><path d="M12 15H28V26Q27 35 19 35Q12 34 12 26Z" fill="#7b83eb" /><rect x="0" y="9.500" width="17" height="17.500" rx="1.500" fill="#4b53bc" /></Svg><b className="absolute top-[9px] left-0 w-[17px] text-center text-[13px] leading-[18px] text-white">T</b></span>,
  <Svg w={36} h={36}><circle cx="18" cy="18" r="17.500" fill="#fbfbfb" stroke="#ddd" /><g strokeWidth="4" strokeLinecap="round"><path d="M7.500 14.500H15M15 8V8.500" stroke="#36c5f0" /><path d="M21.500 7.500V14.500M28 14.500H27.500" stroke="#2eb67d" /><path d="M21.500 21.500H29M21.500 28V27.500" stroke="#ecb22e" /><path d="M14.500 21.500V28.500M8 21.500H8.500" stroke="#e01e5a" /></g></Svg>,
  <Svg w={36} h={36}><g stroke="#222" strokeWidth="1"><path d="M17 .5H33V15H17Z" fill="#c5c5c5" /><path d="M19 3H30V12H19Z" fill="#1414d8" /><path d="M14 15H35.500V19H14Z" fill="#ddd" /><path d="M3 18.500H19V31H3Z" fill="#c5c5c5" /><path d="M5 21H16V29H5Z" fill="#1414d8" /><path d="M.5 31H21V35.500H.5Z" fill="#ddd" /></g><path d="M26 7L13 15L15 18L9 25L23 17L20 14Z" fill="#fff100" stroke="#444" strokeWidth=".6" /></Svg>,
  <Svg w={36} h={36}><path d="M0 3Q0 2 1 2H12L15 5H35Q36 5 36 6V34H0Z" fill="#fcca45" /><path d="M0 3Q0 2 1 2H12L15 5L12 8H0Z" fill="#d99a0b" /><path d="M6 34V28Q6 24 10 24H26Q30 24 30 28V34Z" fill="#1273cf" /><path d="M11 29.500H25" stroke="#0a4d97" strokeWidth="1.800" /></Svg>,
  <Svg w={36} h={36}><path d="M4 2H32V30H4Z" fill="#5cc7e3" /><path d="M4 30H32V32H4Z" fill="#e6f1f5" /><rect x="4" y="32" width="28" height="4" fill="#a4531e" /><path d="M8 0V4M14.500 0V4M21 0V4M27.500 0V4" stroke="#0d6b8c" strokeWidth="2.400" /><path d="M9 11H27M9 17H27M9 23H27" stroke="#116583" strokeWidth="1.900" /></Svg>,
];

function Taskbar() {
  return (
    <footer className="flex h-[55px] shrink-0 items-start overflow-hidden border-t-2 border-[#b9b9ae] bg-[linear-gradient(to_right,#e3e8e4_0%,#e9ebdc_14%,#efecd0_30%,#efeccb_60%,#eeeccd_80%,#e2e6dd_91%,#dbe1e8_100%)] pt-[4px] text-[#1f1f1f]">
      <div className="relative mt-[4px] h-[46px] w-[296px] shrink-0">
        <Svg w={40} h={44} className="ml-[4px]">
          <path d="M1 17Q0 11 5 11Q7 5 13 7Q18 9 16 18H4Q2 19 1 17Z" fill="#aebfe8" />
          <path d="M3.500 28Q15 31 21 19H33Q35 37 24 40Q9 43 3.500 28Z" fill="#ef9425" />
        </Svg>
        <span className="absolute top-[1px] left-[17px] flex h-[23px] w-[34px] items-center justify-center rounded-full bg-[#f8f9f5] text-[16px] leading-none">29°</span>
      </div>
      {pinned.map((icon, i) => (
        <span
          key={i}
          className={
            i === 4
              ? "mx-[5px] flex h-[50px] w-[56px] shrink-0 items-start justify-center rounded-[5px] border border-[#e3e2d0] bg-[#f8f7ec] pt-[11px]"
              : "flex h-[50px] w-[66.070px] shrink-0 items-start justify-center pt-[12px]"
          }
        >
          {icon}
        </span>
      ))}
      <div className="ml-auto flex shrink-0 items-start">
        <span className="mt-[24px] mr-[30px]"><Svg w={18} h={12}><path d="M1.500 10.500L9 2L16.500 10.500" {...line} strokeWidth={1.8} /></Svg></span>
        <div className="mr-[26px] flex w-[36px] flex-col items-center pt-[8px] text-[16.630px] leading-[23px]">
          <span>ENG</span>
          <span>IN</span>
        </div>
        <span className="mt-[20px] mr-[13px] flex items-center gap-[10px]">
          <Svg w={26} h={20}><path d="M2 7Q13 -3 24 7M5.500 11.500Q13 5 20.500 11.500M9 15Q13 12 17 15" {...line} strokeWidth={1.7} /><circle cx="13" cy="17.500" r="1.900" fill="#1f1f1f" /></Svg>
          <Svg w={26} h={20}><path d="M1.500 7H5L10.500 2V18L5 13H1.500ZM14.500 7Q16.500 10 14.500 13M18 4.500Q21.500 10 18 15.500M21.500 2Q26.500 10 21.500 18" {...line} strokeWidth={1.5} /></Svg>
          <Svg w={26} h={20}><rect x="3" y="4.500" width="19" height="13.500" rx="3" {...line} strokeWidth={1.5} /><path d="M5.500 13L9.500 6.500H20V16H5.500Z" fill="#1f1f1f" /><rect x="23" y="9" width="2.500" height="5" rx="1" fill="#1f1f1f" /><path d="M5 0L0 7.500H4L2.500 12L8.500 5H5Z" fill="#1f1f1f" stroke="#eeeccd" strokeWidth=".6" /></Svg>
        </span>
        <div className="mr-[13px] flex w-[104px] flex-col items-end pt-[5px] leading-[24px]">
          <span className="text-[16.820px]">04:36</span>
          <span className="text-[17.720px]">08-08-2023</span>
        </div>
        <span className="relative mt-[18px] mr-[14px] block h-[26px] w-[22px]">
          <Svg w={22} h={26}><path d="M10 2Q17 3 17.500 10V16L20 20H0L2.500 16V10Q3 3 10 2ZM7 21.500H13Q12 24.500 10 24.500Q8 24.500 7 21.500Z" fill="#1f1f1f" /><path d="M7 9H12L7 15.500H12" fill="none" stroke="#e2e6dd" strokeWidth="1.500" /><path d="M14 2.500H20L14.500 9H20.500" fill="none" stroke="#e2e6dd" strokeWidth="3.500" /><path d="M14 2.500H20L14.500 9H20.500" fill="none" stroke="#1f1f1f" strokeWidth="1.500" /></Svg>
        </span>
      </div>
    </footer>
  );
}

export default function App() {
  return (
    <div className={`flex h-[1059px] w-[1893px] flex-col overflow-hidden bg-[#f7f7f7] ${UI}`}>
      <TabStrip />
      <div className="flex w-[1828px] shrink-0 flex-col">
        <AddressBar />
      </div>
      <div className="flex min-h-0 flex-1">
        <div className="flex w-[1828px] shrink-0 flex-col border-r border-[#bcbcbc]">
          <BookmarksBar />
          <div className="h-[2px] shrink-0 bg-[#bfc1bf]" />
          <JaegerPage />
        </div>
        <Sidebar />
      </div>
      <Taskbar />
    </div>
  );
}
